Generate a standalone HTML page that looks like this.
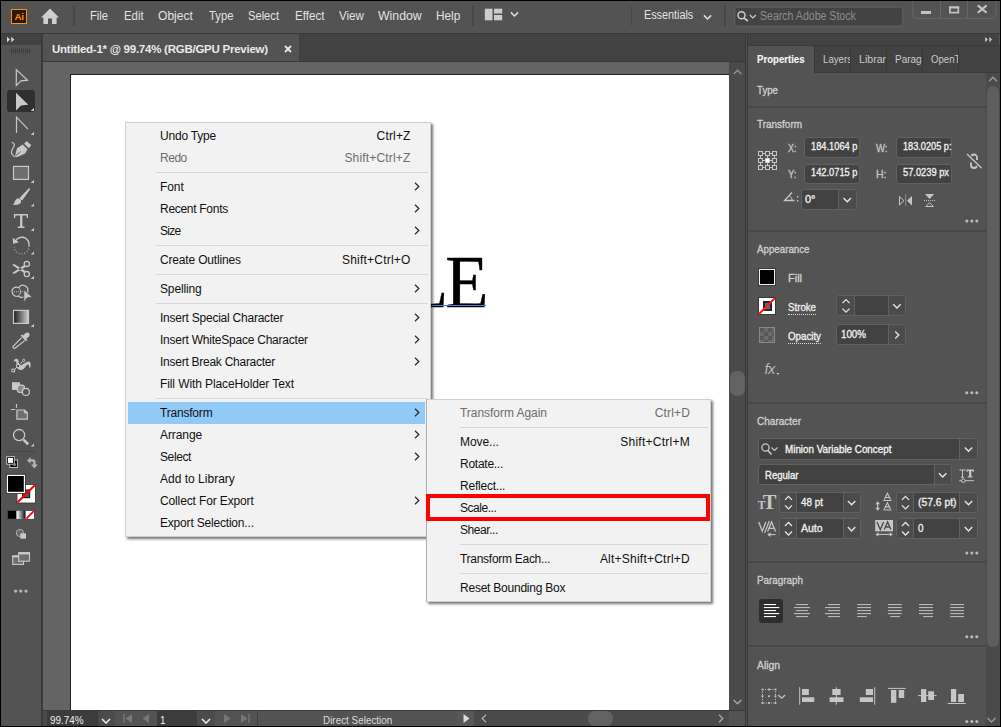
<!DOCTYPE html>
<html><head><meta charset="utf-8">
<style>
*{box-sizing:border-box;margin:0;padding:0}
html,body{width:1001px;height:727px;overflow:hidden;background:#000}
body{position:relative;font-family:"Liberation Sans",sans-serif;font-size:12px;color:#ddd}
.a{position:absolute}
.t{position:absolute;white-space:nowrap;line-height:1}
#menubar{left:1px;top:1px;width:999px;height:32px;background:#535353}
#mb .t{font-size:13.5px;color:#e6e6e6;top:8px}
#tools{left:1px;top:34px;width:40px;height:692px;background:#535353}
#toolhead{left:1px;top:34px;width:40px;height:11px;background:#424242}
#tabbar{left:43px;top:34px;width:702px;height:28px;background:#424242}
#tab{left:43px;top:34px;width:256px;height:28px;background:#535353}
#canvas{left:43px;top:62px;width:686px;height:648px;background:#646464}
#art{left:70px;top:74px;width:659px;height:636px;background:#fff;border-left:1px solid #222;border-top:1px solid #222}
#vscroll{left:729px;top:62px;width:16px;height:648px;background:#4a4a4a}
#status{left:43px;top:710px;width:702px;height:16px;background:#4a4a4a}
#rpanel{left:748px;top:34px;width:252px;height:692px;background:#535353}
#rhead{left:748px;top:34px;width:251px;height:11px;background:#424242}
.menu{position:absolute;background:#f2f2f2;border:1px solid #cfcfcf;box-shadow:2px 2px 2.5px rgba(0,0,0,.55)}
.menu .t{color:#111;font-size:12px}
.menu .d{color:#6d6d6d}
.menu .sep{position:absolute;height:1px;background:#d7d7d7}
</style></head><body>
<div id="menubar" class="a"></div>
<div class="a" style="left:1px;top:33px;width:999px;height:1px;background:#3a3a3a"></div>
<div id="tools" class="a"></div>
<div id="toolhead" class="a"></div>
<div class="a" style="left:41px;top:33px;width:2px;height:693px;background:#3a3a3a"></div>
<div id="tabbar" class="a"></div>
<div id="tab" class="a"></div>
<div id="canvas" class="a"></div>
<div id="art" class="a"></div>
<div id="vscroll" class="a"></div>
<div id="status" class="a"></div>
<div class="a" style="left:745px;top:33px;width:3px;height:693px;background:#3a3a3a"></div><div class="a" style="left:746px;top:34px;width:1px;height:692px;background:#4c4c4c"></div>
<div id="rpanel" class="a"></div>
<div id="rhead" class="a"></div>

<!--MBS--><div class="a" style="left:11px;top:9px;width:16.4px;height:15px;background:#2b1804;border:1.3px solid #ff8a14;"></div>
<div class="t" style="left:14.4px;top:11.8px;font-size:9.8px;font-weight:bold;color:#ff8a14;letter-spacing:-0.3px">Ai</div>
<svg class="a" style="left:40px;top:8px" width="20" height="17" viewBox="0 0 20 17"><path d="M10 0.6 L19 9.4 H16.6 V16 H12 V10.4 H8 V16 H3.4 V9.4 H1 Z" fill="#cfcfcf"/></svg>
<div class="a" style="left:73.0px;top:6.4px;width:1.6px;height:19.2px;background:#474747"></div>
<div class="a" style="left:472.0px;top:6.4px;width:1.6px;height:19.2px;background:#474747"></div>
<div class="a" style="left:630.5px;top:6.4px;width:1.6px;height:19.2px;background:#474747"></div>
<div class="a" style="left:724.3px;top:6.4px;width:1.6px;height:19.2px;background:#474747"></div>
<div class="t" style="left:90.4px;top:9.6px;font-size:12.3px;color:#e2e2e2;transform-origin:0 50%;transform:scaleX(0.913)">File</div>
<div class="t" style="left:123.5px;top:9.6px;font-size:12.3px;color:#e2e2e2;transform-origin:0 50%;transform:scaleX(0.924)">Edit</div>
<div class="t" style="left:158.3px;top:9.6px;font-size:12.3px;color:#e2e2e2;transform-origin:0 50%;transform:scaleX(0.982)">Object</div>
<div class="t" style="left:208.7px;top:9.6px;font-size:12.3px;color:#e2e2e2;transform-origin:0 50%;transform:scaleX(0.915)">Type</div>
<div class="t" style="left:248.1px;top:9.6px;font-size:12.3px;color:#e2e2e2;transform-origin:0 50%;transform:scaleX(0.907)">Select</div>
<div class="t" style="left:294.5px;top:9.6px;font-size:12.3px;color:#e2e2e2;transform-origin:0 50%;transform:scaleX(0.945)">Effect</div>
<div class="t" style="left:339.1px;top:9.6px;font-size:12.3px;color:#e2e2e2;transform-origin:0 50%;transform:scaleX(0.942)">View</div>
<div class="t" style="left:378.2px;top:9.6px;font-size:12.3px;color:#e2e2e2;transform-origin:0 50%;transform:scaleX(0.999)">Window</div>
<div class="t" style="left:436.4px;top:9.6px;font-size:12.3px;color:#e2e2e2;transform-origin:0 50%;transform:scaleX(0.961)">Help</div>
<div class="t" style="left:644.0px;top:9.2px;font-size:12.3px;color:#e2e2e2;transform-origin:0 50%;transform:scaleX(0.878)">Essentials</div>
<svg class="a" style="left:0;top:0" width="1001" height="34" viewBox="0 0 1001 34">
<rect x="484.8" y="8.7" width="7.7" height="11.6" fill="#cdcdcd"/><rect x="494" y="8.7" width="8.2" height="4.8" fill="#cdcdcd"/><rect x="494" y="15" width="8.2" height="5.3" fill="#cdcdcd"/>
<path d="M510.9 12.4 L514.5 16 L518.1 12.4" fill="none" stroke="#e0e0e0" stroke-width="1.5"/>
<path d="M703.9 15.4 L707.5 19 L711.1 15.4" fill="none" stroke="#e0e0e0" stroke-width="1.5"/>
<rect x="734.8" y="7.2" width="168" height="19" rx="3" fill="#434343" stroke="#626262" stroke-width="1"/>
<circle cx="741.5" cy="15.2" r="3.5" fill="none" stroke="#cfcfcf" stroke-width="1.4"/><path d="M744 17.8 L747.8 21" stroke="#cfcfcf" stroke-width="1.7"/>
<path d="M749.8 15 L752.9 18 L755.9 15" fill="none" stroke="#cfcfcf" stroke-width="1.2"/>
<path d="M912.9 1 V15.4 a3 3 0 0 0 3 3 H992.8 a3 3 0 0 0 3 -3 V1" fill="none" stroke="#666" stroke-width="1"/><path d="M940.5 1 V18.4 M967.5 1 V18.4" stroke="#666" stroke-width="1"/>
<rect x="921" y="11" width="10" height="3" fill="#c2c2c2"/>
<path d="M949.9 7.6 H958.3 V12.7 H949.9 Z" fill="none" stroke="#c2c2c2" stroke-width="1.7"/><rect x="949" y="6.3" width="10.2" height="1.6" fill="#c2c2c2"/>
<path d="M977.8 5.4 L986.6 12.8 M986.6 5.4 L977.8 12.8" stroke="#c6c6c6" stroke-width="2.1"/>
</svg>
<div class="t" style="left:759.8px;top:10.2px;font-size:12px;color:#8c8c8c;transform-origin:0 50%;transform:scaleX(0.881)">Search Adobe Stock</div><!--MBE-->
<!--TS--><svg class="a" style="left:0;top:0" width="45" height="727" viewBox="0 0 45 727"><path d="M7 36.7 L10 39.5 L7 42.3 Z M11.3 36.7 L14.3 39.5 L11.3 42.3 Z" fill="#d8d8d8"/>
<rect x="11.0" y="48.6" width="1" height="4.6" fill="#3e3e3e"/>
<rect x="13.0" y="48.6" width="1" height="4.6" fill="#3e3e3e"/>
<rect x="15.0" y="48.6" width="1" height="4.6" fill="#3e3e3e"/>
<rect x="17.0" y="48.6" width="1" height="4.6" fill="#3e3e3e"/>
<rect x="19.0" y="48.6" width="1" height="4.6" fill="#3e3e3e"/>
<rect x="21.0" y="48.6" width="1" height="4.6" fill="#3e3e3e"/>
<rect x="23.0" y="48.6" width="1" height="4.6" fill="#3e3e3e"/>
<rect x="25.0" y="48.6" width="1" height="4.6" fill="#3e3e3e"/>
<rect x="27.0" y="48.6" width="1" height="4.6" fill="#3e3e3e"/>
<rect x="29.0" y="48.6" width="1" height="4.6" fill="#3e3e3e"/>
<path d="M16.3 69.6 L27.6 80.2 L21 80.8 L16.3 85.6 Z" fill="none" stroke="#c8c8c8" stroke-width="1.2" stroke-linejoin="miter"/>
<rect x="7" y="90" width="28" height="22" rx="3" fill="#2f2f2f"/>
<path d="M16 92.8 L28.3 104.7 L21 105.4 L16 110.4 Z" fill="#c8c8c8"/>
<path d="M30.7 110.9 H34 V107.7 Z" fill="#c8c8c8"/>
<path d="M16.5 133 V117.2 L28 129.2" fill="none" stroke="#c8c8c8" stroke-width="1.2"/>
<path d="M30.7 134.9 H34 V131.7 Z" fill="#c8c8c8"/>
<path d="M11.9 142.2 C14 143.3 15 144.6 14 146.3 C12 149.5 10.8 152 11.8 153.7 C12.5 155 13.6 155.8 14.7 156.7" fill="none" stroke="#c8c8c8" stroke-width="1.2"/>
<path d="M14.7 156.9 L17 148.2 L22.7 144.6 L27.5 149.3 L25.1 153.6 L17.4 156.9 Z" fill="#c8c8c8"/>
<path d="M24.1 143.7 L26.6 140.9 L31.3 145.3 L28.8 148.3 Z" fill="#c8c8c8"/>
<path d="M15.2 156.2 L20.6 151.5" stroke="#535353" stroke-width="0.9"/>
<rect x="13.5" y="166.4" width="15" height="13" fill="#6e6e6e" stroke="#c8c8c8" stroke-width="1.2"/>
<path d="M30.7 182.9 H34 V179.7 Z" fill="#c8c8c8"/>
<path d="M28.6 188.4 C29.6 187.8 30.4 188.6 29.8 189.8 L22.2 200.6 L19.3 198.3 Z" fill="#c8c8c8"/>
<path d="M12.8 204.8 C15 203.4 14.6 199.4 17.6 198.6 C19.6 198.1 21.6 199.8 21 202 C20.2 204.8 16.3 205.2 12.8 204.8 Z" fill="#c8c8c8"/>
<path d="M30.7 206.6 H34 V203.4 Z" fill="#c8c8c8"/>
<path d="M13.9 214 H28 V218 H26.7 V215.6 H22.4 V226.4 H24.5 V227.9 H17.8 V226.4 H20.1 V215.6 H15.2 V218 H13.9 Z" fill="#c8c8c8"/>
<path d="M30.7 230.9 H34 V227.7 Z" fill="#c8c8c8"/>
<path d="M15.2 241.7 A7.2 7.2 0 0 1 28.9 246" fill="none" stroke="#c8c8c8" stroke-width="1.5"/>
<path d="M28.9 246 A7.2 7.2 0 0 1 14.2 247" fill="none" stroke="#c8c8c8" stroke-width="1.1" stroke-dasharray="1 1.8" opacity="0.8"/>
<path d="M12.8 237.8 L13 243.7 L18.8 242.4 Z" fill="#c8c8c8"/>
<path d="M30.7 254.6 H34 V251.4 Z" fill="#c8c8c8"/>
<circle cx="26.8" cy="263.9" r="2.6" fill="none" stroke="#c8c8c8" stroke-width="1.3"/><circle cx="26.8" cy="274.1" r="2.6" fill="none" stroke="#c8c8c8" stroke-width="1.3"/>
<path d="M24.2 265 L25.5 267 L15.4 273.3 C14.2 273.9 13 273.7 12.2 272.9 Z M24.2 273 L25.5 271 L15.4 264.7 C14.2 264.1 13 264.3 12.2 265.1 Z" fill="#c8c8c8"/>
<path d="M30.7 278.9 H34 V275.7 Z" fill="#c8c8c8"/>
<path d="M18.8 287.6 C20 285.6 22.6 284.8 24.6 285.6 C27.4 286.6 28.4 289.6 27.6 292.6 C26.6 296 23.6 298 20.4 297.2 C19.4 297 18.8 296.4 18.4 296 C15.4 297.2 12.2 295 12 291.8 C11.8 288.4 15.4 286 18.8 287.6 Z" fill="none" stroke="#c8c8c8" stroke-width="1.3"/>
<path d="M18.8 287.6 C21.4 289.6 21.2 294 18.4 296" fill="none" stroke="#c8c8c8" stroke-width="0.8"/>
<path d="M14 291.7 H24" stroke="#c8c8c8" stroke-width="1.1" stroke-dasharray="1 1.1"/>
<path d="M23.8 289.6 L32.6 297.4 L27.2 297.8 L23.8 302.4 Z" fill="#c8c8c8" stroke="#535353" stroke-width="0.9"/>
<defs><linearGradient id="g1" x1="0" x2="1" y1="0" y2="0"><stop offset="0" stop-color="#1c1c1c"/><stop offset="1" stop-color="#d0d0d0"/></linearGradient><linearGradient id="g2" x1="0" x2="1" y1="0" y2="0"><stop offset="0" stop-color="#ffffff"/><stop offset="1" stop-color="#111"/></linearGradient></defs>
<rect x="13.5" y="310.4" width="15" height="13" fill="url(#g1)" stroke="#c8c8c8" stroke-width="1.2"/>
<path d="M30.7 326.9 H34 V323.7 Z" fill="#c8c8c8"/>
<path d="M21.6 337.6 L13.6 345.8 C12.4 347.2 13.2 349 15 348.2 C15.6 348 16 347.6 16.4 347.2 L24.6 340.6" fill="none" stroke="#c8c8c8" stroke-width="1.2"/>
<path d="M20.6 335.6 L22 334.4 L23.4 335.6 C24.4 334 25.8 332.6 27.2 332.6 C29.4 332.4 30 334.4 29.4 335.8 C28.8 337.4 27.4 338 26.2 338.6 L27.4 340 L26 341.4 Z" fill="#c8c8c8"/>
<path d="M13.9 361.2 C14 359 16.5 357.6 18 359.6 C19.2 361.2 18.2 363.4 19.4 364.8 C21 366.6 25.5 362.2 28.3 361.6 C31 361.2 31 365.4 30.3 367.6 L29 367.6 C29.4 365.6 28.8 364 27.4 364.8 C25.4 366 24.8 369.4 21.4 369.9 C18.4 370.3 16.6 368.3 16.4 365.8 C16.2 363.8 16.8 362.6 16 361.4 C15.4 360.6 14.8 361 14.8 361.8 Z" fill="#c8c8c8"/>
<path d="M13.4 370.5 L23.6 360.5" stroke="#c8c8c8" stroke-width="1"/>
<rect x="12" y="369.2" width="2.6" height="2.6" fill="#535353" stroke="#c8c8c8" stroke-width="1"/>
<circle cx="18" cy="366" r="1.7" fill="#535353" stroke="#c8c8c8" stroke-width="1"/>
<circle cx="23.7" cy="360.4" r="1.2" fill="#535353" stroke="#c8c8c8" stroke-width="0.9"/>
<rect x="12" y="382.2" width="7.9" height="7.7" fill="#c8c8c8"/>
<rect x="17.4" y="385.2" width="7" height="7.3" rx="2.4" fill="#8a8a8a" stroke="#c8c8c8" stroke-width="1.2"/>
<circle cx="25.9" cy="391.9" r="3.5" fill="#535353" stroke="#c8c8c8" stroke-width="1.2"/>
<path d="M16.5 403.9 V407.8 M10.9 409.5 H15.2" stroke="#c8c8c8" stroke-width="1.2"/>
<path d="M16.9 410 H24.6 L27.3 412.6 V419.2 H16.9 Z" fill="#6e6e6e" stroke="#c8c8c8" stroke-width="1.2"/>
<path d="M24.3 410 V413 H27.3" fill="#c8c8c8" stroke="#c8c8c8" stroke-width="0.8"/>
<circle cx="19.1" cy="435.1" r="5.6" fill="none" stroke="#c8c8c8" stroke-width="1.3"/>
<path d="M23.4 439.6 L28.2 444.2" stroke="#c8c8c8" stroke-width="2.6"/>
<path d="M30.7 446.6 H34 V443.4 Z" fill="#c8c8c8"/>
<rect x="6" y="451" width="30" height="1" fill="#474747"/>
<rect x="9.8" y="460" width="7.6" height="7.5" fill="#000" stroke="#c0c0c0" stroke-width="1"/>
<path d="M13.3 465.4 H15.3 V463.4" fill="none" stroke="#c0c0c0" stroke-width="0.8"/>
<rect x="6.7" y="456.6" width="7.6" height="7.6" fill="#000" stroke="#c0c0c0" stroke-width="1"/>
<rect x="8" y="457.9" width="5" height="5" fill="#fff"/>
<path d="M27 460.5 L30.6 457 V459.2 H32.6 C34.6 459.2 35.6 460.4 35.6 462.4 V464.6 H37.8 L34.4 468.4 L31 464.6 H33.2 V462.6 C33.2 461.8 32.8 461.6 32.2 461.6 H30.6 V463.8 Z" fill="#b4b4b4"/>
<rect x="17" y="484.6" width="18.4" height="18.4" fill="#fff" stroke="#333" stroke-width="0.8"/>
<rect x="22.6" y="490" width="7" height="7.6" fill="#535353" stroke="#222" stroke-width="1.2"/>
<path d="M17.6 502.3 L34.8 485.2" stroke="#fe0000" stroke-width="2"/>
<rect x="6.3" y="474.3" width="19.1" height="19.1" fill="#fff" stroke="#2a2a2a" stroke-width="0.8"/>
<rect x="8" y="476" width="15.8" height="15.8" fill="#000"/>
<rect x="7.4" y="510.4" width="27" height="8.9" fill="#fff" stroke="#3a3a3a" stroke-width="0.8"/>
<rect x="7.8" y="510.8" width="8.7" height="8.1" fill="#000"/>
<rect x="16.8" y="510.8" width="8.5" height="8.1" fill="url(#g2)"/>
<path d="M25.5 510.4 V519.3" stroke="#555" stroke-width="0.6"/><path d="M26.3 518.6 L33.8 511.2" stroke="#fe0000" stroke-width="1.8"/>
<circle cx="19.9" cy="532.9" r="3.6" fill="#686868" stroke="#b0b0b0" stroke-width="1"/>
<rect x="20.3" y="533.3" width="5.7" height="5.4" fill="#c8c8c8"/>
<rect x="12.7" y="555.8" width="10.8" height="8.6" fill="#6e6e6e" stroke="#c8c8c8" stroke-width="1.1"/><rect x="12.7" y="555.8" width="10.8" height="1.6" fill="#c8c8c8"/>
<rect x="18.7" y="552.6" width="10.8" height="8.6" fill="#6e6e6e" stroke="#c8c8c8" stroke-width="1.1"/><rect x="18.7" y="552.6" width="10.8" height="1.8" fill="#c8c8c8"/>
<circle cx="15.6" cy="591.1" r="1.7" fill="#b4b4b4"/>
<circle cx="20.8" cy="591.1" r="1.7" fill="#b4b4b4"/>
<circle cx="26.0" cy="591.1" r="1.7" fill="#b4b4b4"/></svg><!--TE-->

<!-- doc tab -->
<div class="t" style="left:52px;top:44px;font-size:11.5px;font-weight:bold;color:#eaeaea;letter-spacing:-0.25px">Untitled-1* @ 99.74% (RGB/GPU Preview)</div>
<svg class="a" style="left:284px;top:44.5px" width="8" height="8" viewBox="0 0 8 8"><path d="M1 1 L7 7 M7 1 L1 7" stroke="#e8e8e8" stroke-width="1.8"/></svg>
<div class="a" style="left:43px;top:61px;width:702px;height:1px;background:#3a3a3a"></div>
<!-- LE text -->
<div class="t" id="le" style="right:515px;top:245px;font-family:'Liberation Serif',serif;font-size:74px;color:#000;letter-spacing:-3px;-webkit-text-stroke:0.35px #000;transform-origin:100% 50%;transform:scaleX(0.955)">PLE</div>
<div class="a" style="left:304px;top:305px;width:182px;height:1px;background:#3f7bf0"></div>
<!-- vscroll -->
<svg class="a" style="left:733px;top:68.5px" width="9" height="6" viewBox="0 0 9 6"><path d="M0.7 5 L4.5 1.2 L8.3 5" fill="none" stroke="#929292" stroke-width="1.3"/></svg>
<div class="a" style="left:730px;top:371px;width:15px;height:25px;background:#626262;border-radius:7px"></div>
<svg class="a" style="left:733px;top:699px" width="9" height="6" viewBox="0 0 9 6"><path d="M0.7 1 L4.5 4.8 L8.3 1" fill="none" stroke="#aaa" stroke-width="1.3"/></svg>
<div class="a" style="left:729px;top:710px;width:16px;height:16px;background:#535353"></div>
<!-- status -->
<div class="a" style="left:43px;top:710px;width:702px;height:1px;background:#3a3a3a"></div>
<div class="a" style="left:47px;top:711px;width:51px;height:15px;background:#3c3c3c"></div>
<div class="t" id="zm" style="left:49.6px;top:715.3px;font-size:11px;color:#f0f0f0;transform-origin:0 50%;transform:scaleX(0.9)">99.74%</div>
<div class="a" style="left:98px;top:711px;width:17px;height:15px;background:#4b4b4b"></div>
<svg class="a" style="left:101px;top:717.7px" width="10" height="6" viewBox="0 0 10 6"><path d="M1 1 L5 5 L9 1" fill="none" stroke="#eee" stroke-width="1.5"/></svg>
<div class="a" style="left:115px;top:711px;width:142px;height:15px;background:#535353"></div>
<svg class="a" style="left:123px;top:714px" width="10" height="9" viewBox="0 0 10 9"><path d="M1 0 V9" stroke="#777" stroke-width="1.4"/><path d="M9 0 V9 L2.5 4.5 Z" fill="#777"/></svg>
<svg class="a" style="left:142px;top:714px" width="8" height="9" viewBox="0 0 8 9"><path d="M7 0 V9 L0.5 4.5 Z" fill="#777"/></svg>
<div class="a" style="left:157px;top:711px;width:40px;height:15px;background:#3c3c3c"></div>
<div class="t" style="left:160px;top:715.3px;font-size:11px;color:#f0f0f0;transform-origin:0 50%;transform:scaleX(0.9)">1</div>
<div class="a" style="left:197px;top:711px;width:18px;height:15px;background:#4b4b4b"></div>
<svg class="a" style="left:201px;top:717.7px" width="10" height="6" viewBox="0 0 10 6"><path d="M1 1 L5 5 L9 1" fill="none" stroke="#eee" stroke-width="1.5"/></svg>
<svg class="a" style="left:223px;top:714px" width="8" height="9" viewBox="0 0 8 9"><path d="M1 0 V9 L7.5 4.5 Z" fill="#777"/></svg>
<svg class="a" style="left:240px;top:714px" width="10" height="9" viewBox="0 0 10 9"><path d="M9 0 V9" stroke="#777" stroke-width="1.4"/><path d="M1 0 V9 L7.5 4.5 Z" fill="#777"/></svg>
<div class="a" style="left:257px;top:711px;width:1px;height:15px;background:#3f3f3f"></div>
<div class="a" style="left:258px;top:711px;width:199px;height:15px;background:#535353"></div>
<div class="t" id="ds" style="left:322.7px;top:715.3px;font-size:11px;color:#dcdcdc;transform-origin:0 50%;transform:scaleX(0.9)">Direct Selection</div>
<div class="a" style="left:457px;top:711px;width:17px;height:15px;background:#585858"></div>
<svg class="a" style="left:463px;top:714px" width="7" height="9" viewBox="0 0 7 9"><path d="M0.5 0 V9 L6.5 4.5 Z" fill="#ddd"/></svg>
<svg class="a" style="left:481px;top:714px" width="6" height="9" viewBox="0 0 6 9"><path d="M5 0.7 L1.2 4.5 L5 8.3" fill="none" stroke="#aaa" stroke-width="1.3"/></svg>
<div class="a" style="left:588px;top:711px;width:25px;height:15px;background:#626262;border-radius:7px"></div>
<svg class="a" style="left:718px;top:714px" width="6" height="9" viewBox="0 0 6 9"><path d="M1 0.7 L4.8 4.5 L1 8.3" fill="none" stroke="#aaa" stroke-width="1.3"/></svg>

<!--RS--><div class="a" style="left:748.0px;top:46.0px;width:252.0px;height:26.0px;background:#424242;"></div>
<div class="a" style="left:748.0px;top:46.0px;width:66.0px;height:27.0px;background:#535353;"></div>
<div class="a" style="left:814.0px;top:46.0px;width:1.0px;height:26.0px;background:#383838;"></div>
<div class="a" style="left:850.0px;top:46.0px;width:1.0px;height:26.0px;background:#383838;"></div>
<div class="a" style="left:886.0px;top:46.0px;width:1.0px;height:26.0px;background:#383838;"></div>
<div class="a" style="left:922.0px;top:46.0px;width:1.0px;height:26.0px;background:#383838;"></div>
<div class="a" style="left:958.0px;top:46.0px;width:1.0px;height:26.0px;background:#383838;"></div>
<div class="a" style="left:748.0px;top:45.0px;width:252.0px;height:1.0px;background:#3a3a3a;"></div>
<div class="a" style="left:814.0px;top:72.0px;width:186.0px;height:1.0px;background:#3a3a3a;"></div>
<div class="a" style="left:823px;top:52px;width:27px;height:16px;overflow:hidden"><div class="t" style="left:0;top:3.1px;font-size:10.3px;color:#cacaca;transform-origin:0 50%;transform:scaleX(0.94)">Layers</div></div>
<div class="a" style="left:859px;top:52px;width:27px;height:16px;overflow:hidden"><div class="t" style="left:0;top:3.1px;font-size:10.3px;color:#cacaca;transform-origin:0 50%;transform:scaleX(1.03)">Libraries</div></div>
<div class="a" style="left:895px;top:52px;width:27px;height:16px;overflow:hidden"><div class="t" style="left:0;top:3.1px;font-size:10.3px;color:#cacaca;transform-origin:0 50%;transform:scaleX(0.97)">Paragraph</div></div>
<div class="a" style="left:931px;top:52px;width:27px;height:16px;overflow:hidden"><div class="t" style="left:0;top:3.1px;font-size:10.3px;color:#cacaca;transform-origin:0 50%;transform:scaleX(0.935)">OpenType</div></div>
<div class="a" style="left:986.0px;top:73.0px;width:14.0px;height:653.0px;background:#4a4a4a;"></div>
<div class="a" style="left:987.0px;top:86.0px;width:12.0px;height:561.0px;background:#5e5e5e;border-radius:6px;"></div>
<div class="a" style="left:748.0px;top:105.5px;width:238.0px;height:2.0px;background:#484848;"></div>
<div class="a" style="left:748.0px;top:229.5px;width:238.0px;height:2.0px;background:#484848;"></div>
<div class="a" style="left:748.0px;top:401.5px;width:238.0px;height:2.0px;background:#484848;"></div>
<div class="a" style="left:748.0px;top:561.0px;width:238.0px;height:2.0px;background:#484848;"></div>
<div class="a" style="left:748.0px;top:645.0px;width:238.0px;height:2.0px;background:#484848;"></div>
<div class="a" style="left:804.2px;top:137.4px;width:55.8px;height:20.6px;background:#424242;border:1px solid #606060;border-radius:3px;"></div>
<div class="a" style="left:804.2px;top:163.6px;width:55.8px;height:20.4px;background:#424242;border:1px solid #606060;border-radius:3px;"></div>
<div class="a" style="left:896.3px;top:137.4px;width:55.5px;height:20.6px;background:#424242;border:1px solid #606060;border-radius:3px;"></div>
<div class="a" style="left:896.3px;top:163.6px;width:55.5px;height:20.4px;background:#424242;border:1px solid #606060;border-radius:3px;"></div>
<div class="a" style="left:800.5px;top:189.0px;width:56.0px;height:21.0px;background:#424242;border:1px solid #606060;border-radius:3px;"></div>
<div class="a" style="left:838.0px;top:190.0px;width:17.5px;height:19.0px;background:#4b4b4b;border-left:1px solid #606060;border-radius:0 2px 2px 0;"></div>
<div class="a" style="left:758.0px;top:268.0px;width:18.0px;height:18.0px;background:#000;border:1px solid #3a3a3a;box-shadow:inset 0 0 0 1px #f0f0f0;"></div>
<div class="a" style="left:758.0px;top:297.0px;width:18.0px;height:18.0px;background:#fff;border:1px solid #3a3a3a;"></div>
<div class="a" style="left:762.5px;top:300.5px;width:9.0px;height:10.0px;background:#6a6a6a;border:2px solid #262626;"></div>
<div class="a" style="left:836.4px;top:295.3px;width:70.0px;height:21.0px;background:#424242;border:1px solid #606060;border-radius:3px;"></div>
<div class="a" style="left:837.4px;top:296.3px;width:18.1px;height:19.0px;background:#4b4b4b;border-right:1px solid #606060;border-radius:2px 0 0 2px;"></div>
<div class="a" style="left:887.5px;top:296.3px;width:17.9px;height:19.0px;background:#4b4b4b;border-left:1px solid #606060;border-radius:0 2px 2px 0;"></div>
<div class="a" style="left:759.0px;top:327.0px;width:16.0px;height:16.0px;background:#6a6a6a;border:1px solid #888;"></div>
<div class="a" style="left:760.0px;top:328.0px;width:4.0px;height:4.0px;background:#585858;"></div>
<div class="a" style="left:768.0px;top:328.0px;width:4.0px;height:4.0px;background:#585858;"></div>
<div class="a" style="left:764.0px;top:332.0px;width:4.0px;height:4.0px;background:#585858;"></div>
<div class="a" style="left:772.0px;top:332.0px;width:2.0px;height:4.0px;background:#585858;"></div>
<div class="a" style="left:760.0px;top:336.0px;width:4.0px;height:4.0px;background:#585858;"></div>
<div class="a" style="left:768.0px;top:336.0px;width:4.0px;height:4.0px;background:#585858;"></div>
<div class="a" style="left:764.0px;top:340.0px;width:4.0px;height:2.0px;background:#585858;"></div>
<div class="a" style="left:836.4px;top:324.4px;width:70.0px;height:21.0px;background:#424242;border:1px solid #606060;border-radius:3px;"></div>
<div class="a" style="left:887.5px;top:325.4px;width:17.9px;height:19.0px;background:#4b4b4b;border-left:1px solid #606060;border-radius:0 2px 2px 0;"></div>
<div class="a" style="left:788px;top:313.5px;width:28px;height:0;border-top:1px dotted #ddd"></div>
<div class="a" style="left:788px;top:342.5px;width:33px;height:0;border-top:1px dotted #ddd"></div>
<div class="t" style="left:764.5px;top:361.8px;font-style:italic;font-size:14.5px;color:#b8b8b8;letter-spacing:-0.6px">fx</div>
<div class="a" style="left:758.3px;top:438.2px;width:219.4px;height:21.9px;background:#424242;border:1px solid #606060;border-radius:3px;"></div>
<div class="a" style="left:959.3px;top:439.2px;width:17.4px;height:19.9px;background:#4b4b4b;border-left:1px solid #606060;border-radius:0 2px 2px 0;"></div>
<div class="a" style="left:758.3px;top:464.2px;width:193.4px;height:21.0px;background:#424242;border:1px solid #606060;border-radius:3px;"></div>
<div class="a" style="left:933.7px;top:465.2px;width:17.0px;height:19.0px;background:#4b4b4b;border-left:1px solid #606060;border-radius:0 2px 2px 0;"></div>
<div class="a" style="left:779.4px;top:492.0px;width:81.3px;height:21.2px;background:#424242;border:1px solid #606060;border-radius:3px;"></div>
<div class="a" style="left:780.4px;top:493.0px;width:17.1px;height:19.2px;background:#4b4b4b;border-right:1px solid #606060;border-radius:2px 0 0 2px;"></div>
<div class="a" style="left:842.5px;top:493.0px;width:17.2px;height:19.2px;background:#4b4b4b;border-left:1px solid #606060;border-radius:0 2px 2px 0;"></div>
<div class="a" style="left:896.4px;top:492.0px;width:81.3px;height:21.2px;background:#424242;border:1px solid #606060;border-radius:3px;"></div>
<div class="a" style="left:897.4px;top:493.0px;width:17.1px;height:19.2px;background:#4b4b4b;border-right:1px solid #606060;border-radius:2px 0 0 2px;"></div>
<div class="a" style="left:959.3px;top:493.0px;width:17.4px;height:19.2px;background:#4b4b4b;border-left:1px solid #606060;border-radius:0 2px 2px 0;"></div>
<div class="a" style="left:779.4px;top:518.2px;width:81.3px;height:21.0px;background:#424242;border:1px solid #606060;border-radius:3px;"></div>
<div class="a" style="left:780.4px;top:519.2px;width:17.1px;height:19.0px;background:#4b4b4b;border-right:1px solid #606060;border-radius:2px 0 0 2px;"></div>
<div class="a" style="left:842.5px;top:519.2px;width:17.2px;height:19.0px;background:#4b4b4b;border-left:1px solid #606060;border-radius:0 2px 2px 0;"></div>
<div class="a" style="left:896.4px;top:518.2px;width:81.3px;height:21.0px;background:#424242;border:1px solid #606060;border-radius:3px;"></div>
<div class="a" style="left:897.4px;top:519.2px;width:17.1px;height:19.0px;background:#4b4b4b;border-right:1px solid #606060;border-radius:2px 0 0 2px;"></div>
<div class="a" style="left:959.3px;top:519.2px;width:17.4px;height:19.0px;background:#4b4b4b;border-left:1px solid #606060;border-radius:0 2px 2px 0;"></div>
<div class="a" style="left:759.0px;top:599.0px;width:24.4px;height:23.8px;background:#2e2e2e;border-radius:3px;"></div>
<div class="t" style="left:757.0px;top:55.4px;font-size:10.3px;color:#f4f4f4;font-weight:bold;-webkit-text-stroke:0.15px #f4f4f4;transform-origin:0 50%;transform:scaleX(0.933);">Properties</div>
<div class="t" style="left:757.0px;top:86.4px;font-size:10.3px;color:#cfcfcf;-webkit-text-stroke:0.32px #cfcfcf;transform-origin:0 50%;transform:scaleX(0.941);">Type</div>
<div class="t" style="left:757.0px;top:120.4px;font-size:10.3px;color:#cfcfcf;-webkit-text-stroke:0.32px #cfcfcf;transform-origin:0 50%;transform:scaleX(0.967);">Transform</div>
<div class="t" style="left:757.0px;top:245.4px;font-size:10.3px;color:#cfcfcf;-webkit-text-stroke:0.32px #cfcfcf;transform-origin:0 50%;transform:scaleX(0.945);">Appearance</div>
<div class="t" style="left:757.0px;top:417.4px;font-size:10.3px;color:#cfcfcf;-webkit-text-stroke:0.32px #cfcfcf;transform-origin:0 50%;transform:scaleX(0.973);">Character</div>
<div class="t" style="left:757.0px;top:576.4px;font-size:10.3px;color:#cfcfcf;-webkit-text-stroke:0.32px #cfcfcf;transform-origin:0 50%;transform:scaleX(0.956);">Paragraph</div>
<div class="t" style="left:757.0px;top:661.4px;font-size:10.3px;color:#cfcfcf;-webkit-text-stroke:0.32px #cfcfcf;transform-origin:0 50%;transform:scaleX(1.004);">Align</div>
<div class="t" style="left:788.0px;top:144.4px;font-size:10.3px;color:#c4c4c4;-webkit-text-stroke:0.32px #c4c4c4;transform-origin:0 50%;transform:scaleX(0.873);">X:</div>
<div class="t" style="left:788.0px;top:170.4px;font-size:10.3px;color:#c4c4c4;-webkit-text-stroke:0.32px #c4c4c4;transform-origin:0 50%;transform:scaleX(0.927);">Y:</div>
<div class="t" style="left:875.5px;top:144.4px;font-size:10.3px;color:#c4c4c4;-webkit-text-stroke:0.32px #c4c4c4;transform-origin:0 50%;transform:scaleX(0.927);">W:</div>
<div class="t" style="left:875.5px;top:170.4px;font-size:10.3px;color:#c4c4c4;-webkit-text-stroke:0.32px #c4c4c4;transform-origin:0 50%;transform:scaleX(1.018);">H:</div>
<div class="t" style="left:810.5px;top:142.4px;font-size:10.3px;color:#f0f0f0;-webkit-text-stroke:0.32px #f0f0f0;transform-origin:0 50%;transform:scaleX(0.902);">184.1064 p</div>
<div class="t" style="left:810.5px;top:168.4px;font-size:10.3px;color:#f0f0f0;-webkit-text-stroke:0.32px #f0f0f0;transform-origin:0 50%;transform:scaleX(0.902);">142.0715 p</div>
<div class="t" style="left:805.0px;top:195.4px;font-size:10.3px;color:#f0f0f0;-webkit-text-stroke:0.32px #f0f0f0;transform-origin:0 50%;transform:scaleX(1.065);">0°</div>
<div class="t" style="left:788.0px;top:274.4px;font-size:10.3px;color:#d0d0d0;-webkit-text-stroke:0.32px #d0d0d0;transform-origin:0 50%;transform:scaleX(1.064);">Fill</div>
<div class="t" style="left:788.0px;top:303.4px;font-size:10.3px;color:#f0f0f0;-webkit-text-stroke:0.32px #f0f0f0;transform-origin:0 50%;transform:scaleX(0.941);">Stroke</div>
<div class="t" style="left:788.0px;top:332.4px;font-size:10.3px;color:#f0f0f0;-webkit-text-stroke:0.32px #f0f0f0;transform-origin:0 50%;transform:scaleX(0.945);">Opacity</div>
<div class="t" style="left:841.0px;top:330.4px;font-size:10.3px;color:#f0f0f0;-webkit-text-stroke:0.32px #f0f0f0;transform-origin:0 50%;transform:scaleX(0.949);">100%</div>
<div class="t" style="left:784.6px;top:445.4px;font-size:10.3px;color:#f4f4f4;-webkit-text-stroke:0.32px #f4f4f4;transform-origin:0 50%;transform:scaleX(0.955);">Minion Variable Concept</div>
<div class="t" style="left:765.0px;top:471.4px;font-size:10.3px;color:#f4f4f4;-webkit-text-stroke:0.32px #f4f4f4;transform-origin:0 50%;transform:scaleX(0.929);">Regular</div>
<div class="t" style="left:801.0px;top:498.2px;font-size:10.3px;color:#f0f0f0;-webkit-text-stroke:0.32px #f0f0f0;transform-origin:0 50%;transform:scaleX(0.960);">48 pt</div>
<div class="t" style="left:801.0px;top:524.4px;font-size:10.3px;color:#f0f0f0;-webkit-text-stroke:0.32px #f0f0f0;transform-origin:0 50%;transform:scaleX(1.015);">Auto</div>
<div class="t" style="left:917.5px;top:498.2px;font-size:10.3px;color:#f0f0f0;-webkit-text-stroke:0.32px #f0f0f0;transform-origin:0 50%;transform:scaleX(1.004);">(57.6 pt)</div>
<div class="t" style="left:918.0px;top:524.4px;font-size:10.3px;color:#f0f0f0;-webkit-text-stroke:0.32px #f0f0f0;transform-origin:0 50%;transform:scaleX(0.959);">0</div>
<div class="t" style="left:902.5px;top:142.4px;font-size:10.3px;color:#f0f0f0;-webkit-text-stroke:0.32px #f0f0f0;transform-origin:0 50%;transform:scaleX(0.891);">183.0205 p:</div>
<div class="t" style="left:902.5px;top:168.4px;font-size:10.3px;color:#f0f0f0;-webkit-text-stroke:0.32px #f0f0f0;transform-origin:0 50%;transform:scaleX(0.903);">57.0239 px</div>
<svg class="a" style="left:0;top:0" width="1001" height="727" viewBox="0 0 1001 727"><path d="M985.2 37 L987.8 39.6 L985.2 42.2 Z M989.4 37 L992 39.6 L989.4 42.2 Z" fill="#cfcfcf"/>
<path d="M989.0 81.2 L993.0 77.2 L997.0 81.2" fill="none" stroke="#9c9c9c" stroke-width="1.3"/>
<path d="M987.5 718.0 L991.5 722.0 L995.5 718.0" fill="none" stroke="#9c9c9c" stroke-width="1.3"/>
<circle cx="966.8" cy="221.0" r="1.5" fill="#bdbdbd"/>
<circle cx="971.8" cy="221.0" r="1.5" fill="#bdbdbd"/>
<circle cx="976.8" cy="221.0" r="1.5" fill="#bdbdbd"/>
<circle cx="966.8" cy="392.7" r="1.5" fill="#bdbdbd"/>
<circle cx="971.8" cy="392.7" r="1.5" fill="#bdbdbd"/>
<circle cx="976.8" cy="392.7" r="1.5" fill="#bdbdbd"/>
<circle cx="966.8" cy="553.0" r="1.5" fill="#bdbdbd"/>
<circle cx="971.8" cy="553.0" r="1.5" fill="#bdbdbd"/>
<circle cx="976.8" cy="553.0" r="1.5" fill="#bdbdbd"/>
<circle cx="966.8" cy="636.7" r="1.5" fill="#bdbdbd"/>
<circle cx="971.8" cy="636.7" r="1.5" fill="#bdbdbd"/>
<circle cx="976.8" cy="636.7" r="1.5" fill="#bdbdbd"/>
<circle cx="966.8" cy="721.6" r="1.5" fill="#bdbdbd"/>
<circle cx="971.8" cy="721.6" r="1.5" fill="#bdbdbd"/>
<circle cx="976.8" cy="721.6" r="1.5" fill="#bdbdbd"/>
<path d="M843.5 198.0 L847.2 201.7 L851.0 198.0" fill="none" stroke="#e6e6e6" stroke-width="1.4"/>
<path d="M759 314 L775 298" stroke="#ff1a1a" stroke-width="2"/>
<path d="M842.5 303.1 L846.0 299.6 L849.5 303.1" fill="none" stroke="#e6e6e6" stroke-width="1.3"/>
<path d="M842.5 308.6 L846.0 312.1 L849.5 308.6" fill="none" stroke="#e6e6e6" stroke-width="1.3"/>
<path d="M893.2 304.2 L897.0 308.0 L900.7 304.2" fill="none" stroke="#e6e6e6" stroke-width="1.4"/>
<path d="M895.2 331.4 L898.8 334.9 L895.2 338.4" fill="none" stroke="#e6e6e6" stroke-width="1.4"/>
<path d="M776.3 373 h3.2 l-1.6 2 Z" fill="#c4c4c4"/>
<path d="M964.8 447.6 L968.5 451.3 L972.2 447.6" fill="none" stroke="#e6e6e6" stroke-width="1.4"/>
<path d="M939.0 473.2 L942.7 476.9 L946.4 473.2" fill="none" stroke="#e6e6e6" stroke-width="1.4"/>
<path d="M785.0 499.9 L788.5 496.4 L792.0 499.9" fill="none" stroke="#e6e6e6" stroke-width="1.3"/>
<path d="M785.0 505.4 L788.5 508.9 L792.0 505.4" fill="none" stroke="#e6e6e6" stroke-width="1.3"/>
<path d="M847.9 501.1 L851.6 504.8 L855.3 501.1" fill="none" stroke="#e6e6e6" stroke-width="1.4"/>
<path d="M902.0 499.9 L905.5 496.4 L909.0 499.9" fill="none" stroke="#e6e6e6" stroke-width="1.3"/>
<path d="M902.0 505.4 L905.5 508.9 L909.0 505.4" fill="none" stroke="#e6e6e6" stroke-width="1.3"/>
<path d="M964.8 501.1 L968.5 504.8 L972.2 501.1" fill="none" stroke="#e6e6e6" stroke-width="1.4"/>
<path d="M785.0 526.0 L788.5 522.5 L792.0 526.0" fill="none" stroke="#e6e6e6" stroke-width="1.3"/>
<path d="M785.0 531.5 L788.5 535.0 L792.0 531.5" fill="none" stroke="#e6e6e6" stroke-width="1.3"/>
<path d="M847.9 527.1 L851.6 530.9 L855.3 527.1" fill="none" stroke="#e6e6e6" stroke-width="1.4"/>
<path d="M902.0 526.0 L905.5 522.5 L909.0 526.0" fill="none" stroke="#e6e6e6" stroke-width="1.3"/>
<path d="M902.0 531.5 L905.5 535.0 L909.0 531.5" fill="none" stroke="#e6e6e6" stroke-width="1.3"/>
<path d="M964.8 527.1 L968.5 530.9 L972.2 527.1" fill="none" stroke="#e6e6e6" stroke-width="1.4"/>
<circle cx="765.5" cy="447.5" r="3.6" fill="none" stroke="#c8c8c8" stroke-width="1.3"/><path d="M768 450.5 L771.5 454.5" stroke="#c8c8c8" stroke-width="1.6"/>
<path d="M771.5 447.5 L774.5 450.5 L777.5 447.5" fill="none" stroke="#c8c8c8" stroke-width="1.1"/><path d="M763 153.5 H765 M770 153.5 H772" stroke="#c6c6c6" stroke-width="1"/>
<path d="M763 160.5 H765 M770 160.5 H772" stroke="#c6c6c6" stroke-width="1"/>
<path d="M763 167.5 H765 M770 167.5 H772" stroke="#c6c6c6" stroke-width="1"/>
<path d="M760.5 156 V158 M760.5 163 V165" stroke="#c6c6c6" stroke-width="1"/>
<path d="M767.5 156 V158 M767.5 163 V165" stroke="#c6c6c6" stroke-width="1"/>
<path d="M774.5 156 V158 M774.5 163 V165" stroke="#c6c6c6" stroke-width="1"/>
<rect x="758.5" y="151.5" width="4" height="4" fill="none" stroke="#c6c6c6" stroke-width="1"/>
<rect x="758.5" y="158.5" width="4" height="4" fill="none" stroke="#c6c6c6" stroke-width="1"/>
<rect x="758.5" y="165.5" width="4" height="4" fill="none" stroke="#c6c6c6" stroke-width="1"/>
<rect x="765.5" y="151.5" width="4" height="4" fill="none" stroke="#c6c6c6" stroke-width="1"/>
<rect x="765.5" y="158.5" width="4" height="4" fill="none" stroke="#c6c6c6" stroke-width="1"/>
<rect x="766.0" y="159.0" width="3" height="3" fill="#fff"/>
<rect x="765.5" y="165.5" width="4" height="4" fill="none" stroke="#c6c6c6" stroke-width="1"/>
<rect x="772.5" y="151.5" width="4" height="4" fill="none" stroke="#c6c6c6" stroke-width="1"/>
<rect x="772.5" y="158.5" width="4" height="4" fill="none" stroke="#c6c6c6" stroke-width="1"/>
<rect x="772.5" y="165.5" width="4" height="4" fill="none" stroke="#c6c6c6" stroke-width="1"/>
<path d="M971 160 V157.5 a3 3 0 0 1 6 0 V160 M971 162.5 V165 a3 3 0 0 0 6 0 V162.5" fill="none" stroke="#c6c6c6" stroke-width="1.8"/>
<path d="M967 154 L981.5 168" stroke="#535353" stroke-width="3.6"/><path d="M967 154 L981.5 168" stroke="#c6c6c6" stroke-width="1.4"/>
<path d="M794.5 200.5 H784.5 L792 192.5" fill="none" stroke="#c6c6c6" stroke-width="1.3"/><path d="M789.3 195.6 A6 6 0 0 1 792.3 200.5" fill="none" stroke="#c6c6c6" stroke-width="1"/>
<rect x="797" y="196" width="1.3" height="1.6" fill="#c6c6c6"/><rect x="797" y="200" width="1.3" height="1.6" fill="#c6c6c6"/>
<path d="M899.5 196.5 L904 200.7 L899.5 205 Z" fill="none" stroke="#c6c6c6" stroke-width="1"/>
<path d="M905.7 194.5 V206.5" stroke="#c6c6c6" stroke-width="1" stroke-dasharray="1 1"/>
<path d="M912 196 L907 200.7 L912 205.5 Z" fill="#c6c6c6"/>
<path d="M925 194 H934.2 L929.6 199 Z" fill="#c6c6c6"/>
<path d="M924 200.6 H935.5" stroke="#c6c6c6" stroke-width="1" stroke-dasharray="1 1"/>
<path d="M925.8 206.5 H933.4 L929.6 202.7 Z" fill="none" stroke="#c6c6c6" stroke-width="1"/>
<path d="M959.5 470 H965.5 M962.5 470 V477.3 M961 477.3 H964" stroke="#c6c6c6" stroke-width="1" fill="none"/>
<path d="M966.5 469.5 H973.8 V472 H972.8 V471 H971.3 V476.3 H972.5 V477.5 H967.8 V476.3 H969 V471 H967.5 V472 H966.5 Z" fill="#c6c6c6"/>
<path d="M959.3 480.7 H973.8" stroke="#c6c6c6" stroke-width="1"/><circle cx="963.3" cy="480.7" r="1.8" fill="#535353" stroke="#c6c6c6" stroke-width="1"/>
<text x="757.8" y="508.8" font-family="Liberation Serif" font-weight="bold" font-size="11.5" fill="#c6c6c6">T</text>
<text x="762.8" y="508.8" font-family="Liberation Serif" font-weight="bold" font-size="20.5" fill="#c6c6c6">T</text>
<path d="M758.7 522 L762.3 531.3 L765.9 522" fill="none" stroke="#c6c6c6" stroke-width="1.3"/>
<path d="M769.3 521 L764.6 533" stroke="#c6c6c6" stroke-width="1.2"/>
<path d="M767.6 531.5 L771.6 522 L775.6 531.5 M769.2 528.3 H774" fill="none" stroke="#c6c6c6" stroke-width="1.3"/>
<path d="M775.5 534.6 H768.5" stroke="#c6c6c6" stroke-width="1.1"/><path d="M770.5 532.3 L767.3 534.6 L770.5 536.9 Z" fill="#c6c6c6"/>
<path d="M877.7 503 V509" stroke="#c6c6c6" stroke-width="1.2"/><path d="M875.4 504.2 L877.7 501.3 L880 504.2 Z M875.4 507.8 L877.7 510.7 L880 507.8 Z" fill="#c6c6c6"/>
<path d="M884.3 499.6 L887.4 493.3 L890.5 499.6 M885.4 497.5 H889.4" fill="none" stroke="#c6c6c6" stroke-width="1.1"/>
<path d="M883.3 500.5 H891.5" stroke="#c6c6c6" stroke-width="1"/>
<path d="M884.3 509.0 L887.4 502.7 L890.5 509.0 M885.4 506.9 H889.4" fill="none" stroke="#c6c6c6" stroke-width="1.1"/>
<path d="M883.3 509.9 H891.5" stroke="#c6c6c6" stroke-width="1"/>
<rect x="875.2" y="520" width="17.8" height="11.3" fill="#c6c6c6"/>
<path d="M877 522 L880.3 529.6 L883.6 522" fill="none" stroke="#4a4a4a" stroke-width="1.3"/><path d="M884.3 529.6 L887.6 522 L890.9 529.6 M885.6 527 H889.6" fill="none" stroke="#4a4a4a" stroke-width="1.3"/>
<path d="M877.5 534.4 H890.7" stroke="#c6c6c6" stroke-width="1.1"/><path d="M878.4 532.2 L875.4 534.4 L878.4 536.6 Z M889.8 532.2 L892.8 534.4 L889.8 536.6 Z" fill="#c6c6c6"/>
<rect x="763.9" y="604.0" width="12.0" height="1.1" fill="#ffffff"/>
<rect x="763.9" y="607.0" width="15.4" height="1.1" fill="#ffffff"/>
<rect x="763.9" y="610.0" width="12.0" height="1.1" fill="#ffffff"/>
<rect x="763.9" y="613.0" width="15.4" height="1.1" fill="#ffffff"/>
<rect x="763.9" y="616.0" width="12.0" height="1.1" fill="#ffffff"/>
<rect x="796.0" y="604.0" width="12.0" height="1.1" fill="#b8b8b8"/>
<rect x="793.9" y="607.0" width="16.1" height="1.1" fill="#b8b8b8"/>
<rect x="796.0" y="610.0" width="12.0" height="1.1" fill="#b8b8b8"/>
<rect x="793.9" y="613.0" width="16.1" height="1.1" fill="#b8b8b8"/>
<rect x="796.0" y="616.0" width="12.0" height="1.1" fill="#b8b8b8"/>
<rect x="828.0" y="604.0" width="12.0" height="1.1" fill="#b8b8b8"/>
<rect x="825.0" y="607.0" width="15.0" height="1.1" fill="#b8b8b8"/>
<rect x="828.0" y="610.0" width="12.0" height="1.1" fill="#b8b8b8"/>
<rect x="825.0" y="613.0" width="15.0" height="1.1" fill="#b8b8b8"/>
<rect x="828.0" y="616.0" width="12.0" height="1.1" fill="#b8b8b8"/>
<rect x="857.2" y="604.0" width="13.8" height="1.1" fill="#b8b8b8"/>
<rect x="857.2" y="607.0" width="13.8" height="1.1" fill="#b8b8b8"/>
<rect x="857.2" y="610.0" width="13.8" height="1.1" fill="#b8b8b8"/>
<rect x="857.2" y="613.0" width="13.8" height="1.1" fill="#b8b8b8"/>
<rect x="857.2" y="616.0" width="9.6" height="1.1" fill="#b8b8b8"/>
<rect x="887.9" y="604.0" width="13.9" height="1.1" fill="#b8b8b8"/>
<rect x="887.9" y="607.0" width="13.9" height="1.1" fill="#b8b8b8"/>
<rect x="887.9" y="610.0" width="13.9" height="1.1" fill="#b8b8b8"/>
<rect x="887.9" y="613.0" width="13.9" height="1.1" fill="#b8b8b8"/>
<rect x="890.3" y="616.0" width="9.6" height="1.1" fill="#b8b8b8"/>
<rect x="919.0" y="604.0" width="14.0" height="1.1" fill="#b8b8b8"/>
<rect x="919.0" y="607.0" width="14.0" height="1.1" fill="#b8b8b8"/>
<rect x="919.0" y="610.0" width="14.0" height="1.1" fill="#b8b8b8"/>
<rect x="919.0" y="613.0" width="14.0" height="1.1" fill="#b8b8b8"/>
<rect x="923.1" y="616.0" width="9.9" height="1.1" fill="#b8b8b8"/>
<rect x="950.2" y="604.0" width="13.9" height="1.1" fill="#b8b8b8"/>
<rect x="950.2" y="607.0" width="13.9" height="1.1" fill="#b8b8b8"/>
<rect x="950.2" y="610.0" width="13.9" height="1.1" fill="#b8b8b8"/>
<rect x="950.2" y="613.0" width="13.9" height="1.1" fill="#b8b8b8"/>
<rect x="950.2" y="616.0" width="13.9" height="1.1" fill="#b8b8b8"/>
<rect x="762.5" y="689.5" width="13" height="13.5" fill="none" stroke="#c6c6c6" stroke-width="1" stroke-dasharray="1 1.5"/>
<rect x="761.6" y="688.6" width="1.8" height="1.8" fill="#c6c6c6"/>
<rect x="761.6" y="695.3" width="1.8" height="1.8" fill="#c6c6c6"/>
<rect x="761.6" y="702.1" width="1.8" height="1.8" fill="#c6c6c6"/>
<rect x="768.1" y="688.6" width="1.8" height="1.8" fill="#c6c6c6"/>
<rect x="768.1" y="695.3" width="1.8" height="1.8" fill="#c6c6c6"/>
<rect x="768.1" y="702.1" width="1.8" height="1.8" fill="#c6c6c6"/>
<rect x="774.6" y="688.6" width="1.8" height="1.8" fill="#c6c6c6"/>
<rect x="774.6" y="695.3" width="1.8" height="1.8" fill="#c6c6c6"/>
<rect x="774.6" y="702.1" width="1.8" height="1.8" fill="#c6c6c6"/>
<path d="M778.2 695 L781.7 698.3 L785.2 695" fill="none" stroke="#c6c6c6" stroke-width="1.2"/>
<rect x="799.2" y="687.2" width="1.0" height="17.5" fill="#c6c6c6"/>
<rect x="802.0" y="689.0" width="6.8" height="6.0" fill="#c6c6c6"/>
<rect x="802.0" y="697.3" width="12.3" height="4.7" fill="#c6c6c6"/>
<rect x="835.8" y="687.2" width="1.0" height="17.5" fill="#c6c6c6"/>
<rect x="832.3" y="689.0" width="8.3" height="6.0" fill="#c6c6c6"/>
<rect x="829.6" y="697.3" width="13.9" height="4.7" fill="#c6c6c6"/>
<rect x="874.2" y="687.2" width="1.0" height="17.5" fill="#c6c6c6"/>
<rect x="865.8" y="689.0" width="7.2" height="6.0" fill="#c6c6c6"/>
<rect x="859.8" y="697.3" width="13.2" height="4.7" fill="#c6c6c6"/>
<rect x="887.9" y="687.9" width="18.0" height="1.0" fill="#c6c6c6"/>
<rect x="891.0" y="690.0" width="5.3" height="12.8" fill="#c6c6c6"/>
<rect x="898.7" y="690.0" width="5.5" height="8.0" fill="#c6c6c6"/>
<rect x="917.9" y="695.1" width="18.7" height="1.0" fill="#c6c6c6"/>
<rect x="921.0" y="689.1" width="5.3" height="12.9" fill="#c6c6c6"/>
<rect x="928.2" y="691.3" width="5.8" height="8.7" fill="#c6c6c6"/>
<rect x="947.8" y="703.0" width="18.0" height="1.0" fill="#c6c6c6"/>
<rect x="951.0" y="689.0" width="5.2" height="13.0" fill="#c6c6c6"/>
<rect x="958.2" y="694.0" width="5.8" height="8.0" fill="#c6c6c6"/></svg><!--RE-->
<!--MS--><div class="menu" style="left:125px;top:122px;width:306px;height:415px;"><div class="a" style="left:2px;top:279px;width:297px;height:22px;background:#91c9f7"></div><div class="sep" style="left:30px;top:49px;width:272px"></div><div class="sep" style="left:30px;top:122px;width:272px"></div><div class="sep" style="left:30px;top:151px;width:272px"></div><div class="sep" style="left:30px;top:180px;width:272px"></div><div class="sep" style="left:30px;top:275px;width:272px"></div><div class="t" style="left:34.0px;top:7.3px;letter-spacing:-0.20px">Undo Type</div><div class="t" style="left:250.6px;top:7.3px;letter-spacing:0.17px">Ctrl+Z</div><div class="t d" style="left:34.0px;top:29.3px;letter-spacing:-0.47px">Redo</div><div class="t d" style="left:218.4px;top:29.3px;letter-spacing:0.18px">Shift+Ctrl+Z</div><div class="t" style="left:34.0px;top:58.3px;letter-spacing:-0.08px">Font</div><svg class="a" style="left:288.0px;top:58.5px" width="6" height="9" viewBox="0 0 6 9"><path d="M1 0.8 L4.8 4.5 L1 8.2" fill="none" stroke="#2a2a2a" stroke-width="1.25"/></svg><div class="t" style="left:34.0px;top:80.3px;letter-spacing:-0.29px">Recent Fonts</div><svg class="a" style="left:288.0px;top:80.5px" width="6" height="9" viewBox="0 0 6 9"><path d="M1 0.8 L4.8 4.5 L1 8.2" fill="none" stroke="#2a2a2a" stroke-width="1.25"/></svg><div class="t" style="left:34.0px;top:102.3px;letter-spacing:-0.76px">Size</div><svg class="a" style="left:288.0px;top:102.5px" width="6" height="9" viewBox="0 0 6 9"><path d="M1 0.8 L4.8 4.5 L1 8.2" fill="none" stroke="#2a2a2a" stroke-width="1.25"/></svg><div class="t" style="left:34.0px;top:131.3px;letter-spacing:-0.17px">Create Outlines</div><div class="t" style="left:216.0px;top:131.3px;letter-spacing:0.21px">Shift+Ctrl+O</div><div class="t" style="left:34.0px;top:160.3px;letter-spacing:-0.13px">Spelling</div><svg class="a" style="left:288.0px;top:160.5px" width="6" height="9" viewBox="0 0 6 9"><path d="M1 0.8 L4.8 4.5 L1 8.2" fill="none" stroke="#2a2a2a" stroke-width="1.25"/></svg><div class="t" style="left:34.0px;top:189.3px;letter-spacing:-0.23px">Insert Special Character</div><svg class="a" style="left:288.0px;top:189.5px" width="6" height="9" viewBox="0 0 6 9"><path d="M1 0.8 L4.8 4.5 L1 8.2" fill="none" stroke="#2a2a2a" stroke-width="1.25"/></svg><div class="t" style="left:34.0px;top:211.3px;letter-spacing:-0.23px">Insert WhiteSpace Character</div><svg class="a" style="left:288.0px;top:211.5px" width="6" height="9" viewBox="0 0 6 9"><path d="M1 0.8 L4.8 4.5 L1 8.2" fill="none" stroke="#2a2a2a" stroke-width="1.25"/></svg><div class="t" style="left:34.0px;top:233.3px;letter-spacing:-0.26px">Insert Break Character</div><svg class="a" style="left:288.0px;top:233.5px" width="6" height="9" viewBox="0 0 6 9"><path d="M1 0.8 L4.8 4.5 L1 8.2" fill="none" stroke="#2a2a2a" stroke-width="1.25"/></svg><div class="t" style="left:34.0px;top:255.3px;letter-spacing:-0.10px">Fill With PlaceHolder Text</div><div class="t" style="left:34.0px;top:284.3px;letter-spacing:-0.20px">Transform</div><svg class="a" style="left:288.0px;top:284.5px" width="6" height="9" viewBox="0 0 6 9"><path d="M1 0.8 L4.8 4.5 L1 8.2" fill="none" stroke="#2a2a2a" stroke-width="1.25"/></svg><div class="t" style="left:34.0px;top:306.3px;letter-spacing:-0.09px">Arrange</div><svg class="a" style="left:288.0px;top:306.5px" width="6" height="9" viewBox="0 0 6 9"><path d="M1 0.8 L4.8 4.5 L1 8.2" fill="none" stroke="#2a2a2a" stroke-width="1.25"/></svg><div class="t" style="left:34.0px;top:328.3px;letter-spacing:-0.38px">Select</div><svg class="a" style="left:288.0px;top:328.5px" width="6" height="9" viewBox="0 0 6 9"><path d="M1 0.8 L4.8 4.5 L1 8.2" fill="none" stroke="#2a2a2a" stroke-width="1.25"/></svg><div class="t" style="left:34.0px;top:350.3px;letter-spacing:0.01px">Add to Library</div><div class="t" style="left:34.0px;top:372.3px;letter-spacing:-0.13px">Collect For Export</div><svg class="a" style="left:288.0px;top:372.5px" width="6" height="9" viewBox="0 0 6 9"><path d="M1 0.8 L4.8 4.5 L1 8.2" fill="none" stroke="#2a2a2a" stroke-width="1.25"/></svg><div class="t" style="left:34.0px;top:394.3px;letter-spacing:-0.19px">Export Selection...</div></div>
<div class="menu" style="left:426px;top:399px;width:285px;height:203px;border-left-color:#b0b0b0"><div class="sep" style="left:33px;top:27px;width:248px"></div><div class="sep" style="left:33px;top:144px;width:248px"></div><div class="sep" style="left:33px;top:173px;width:248px"></div><div class="t d" style="left:33.0px;top:7.3px;letter-spacing:-0.04px">Transform Again</div><div class="t d" style="left:227.8px;top:7.3px;letter-spacing:0.14px">Ctrl+D</div><div class="t" style="left:33.0px;top:36.3px;letter-spacing:-0.07px">Move...</div><div class="t" style="left:193.2px;top:36.3px;letter-spacing:0.26px">Shift+Ctrl+M</div><div class="t" style="left:33.0px;top:58.3px;letter-spacing:-0.26px">Rotate...</div><div class="t" style="left:33.0px;top:80.3px;letter-spacing:-0.22px">Reflect...</div><div class="t" style="left:33.0px;top:102.3px;letter-spacing:-0.47px">Scale...</div><div class="t" style="left:33.0px;top:124.3px;letter-spacing:-0.43px">Shear...</div><div class="t" style="left:33.0px;top:153.3px;letter-spacing:-0.28px">Transform Each...</div><div class="t" style="left:172.9px;top:153.3px;letter-spacing:0.23px">Alt+Shift+Ctrl+D</div><div class="t" style="left:33.0px;top:182.3px;letter-spacing:-0.23px">Reset Bounding Box</div><div class="a" style="left:-1px;top:94px;width:284px;height:27px;border:4px solid #fe0000"></div></div><!--ME-->
</body></html>
